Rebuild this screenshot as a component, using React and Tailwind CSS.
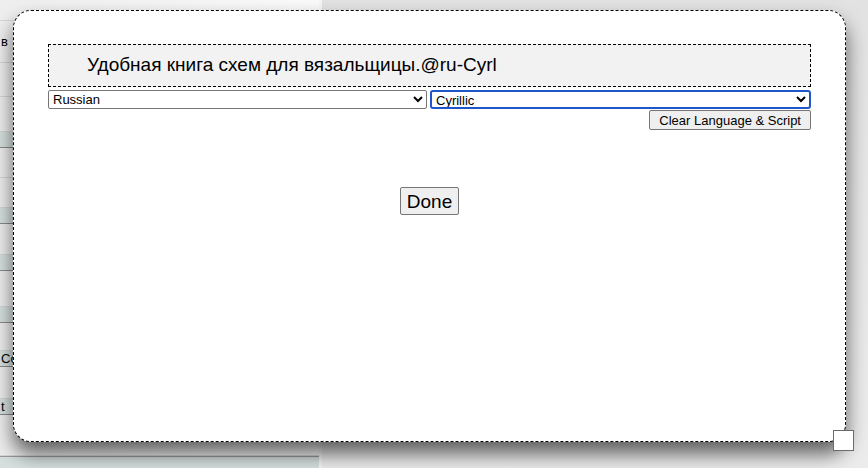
import React from 'react';

const font = { fontFamily: '"Liberation Sans", Arial, sans-serif' };

const BackgroundPanel = () => {
    // rows of the page underneath the dialog, only the left edge shows
    const rows = [
        { h: 'h-[21px]', kind: 'plain' },
        { h: 'h-[42px]', kind: 'text', label: 'в' },
        { h: 'h-[34px]', kind: 'plain' },
        { h: 'h-[35px]', kind: 'plain' },
        { h: 'h-[16px]', kind: 'teal' },
        { h: 'h-[30px]', kind: 'plain' },
        { h: 'h-[30px]', kind: 'plain' },
        { h: 'h-[16px]', kind: 'teal' },
        { h: 'h-[31px]', kind: 'plain' },
        { h: 'h-[16px]', kind: 'teal' },
        { h: 'h-[36px]', kind: 'plain' },
        { h: 'h-[16px]', kind: 'teal' },
        { h: 'h-[28px]', kind: 'plain' },
        { h: 'h-[16px]', kind: 'teal', label: 'Co' },
        { h: 'h-[32px]', kind: 'plain' },
        { h: 'h-[16px]', kind: 'teal', label: 't' },
        { h: 'h-[41px]', kind: 'plain' },
    ];

    return (
        <div className="w-[322px] flex flex-col bg-gradient-to-r from-[#eeeeee] to-[#fafafa] border-r-[3px] border-[#f6f6f6]">
            {rows.map((row, i) => (
                <div
                    key={i}
                    className={`${row.h} flex items-center border-b ${row.kind === 'teal' ? 'bg-[#d6e1df] border-[#8a8a8a]' : 'border-[#d6d6d6]'}`}
                >
                    {row.label && <span className="text-[13px] text-black pl-[1px]">{row.label}</span>}
                </div>
            ))}
            <div className="flex-1 bg-[#d6e1df] border-t border-[#9a9a9a]"></div>
        </div>
    );
};

const App = () => {
    return (
        <div className="relative w-[868px] h-[468px] overflow-hidden bg-[#ececec]" style={font}>
            <div className="flex h-full">
                <BackgroundPanel />
                <div className="flex-1 bg-gradient-to-b from-[#e2e2e2] to-[#ececec]"></div>
            </div>

            {/* dialog */}
            <div className="absolute left-[13px] top-[10px] w-[833px] h-[432px] bg-white rounded-[18px] border border-dashed border-black shadow-[0_12px_20px_rgba(0,0,0,0.6)]">
                <div className="pt-[33px] px-[34px]">
                    <div className="h-[43px] bg-[#f2f2f2] border border-dashed border-black flex items-center pl-[38px] text-[19px] text-black">
                        Удобная книга схем для вязальщицы.@ru-Cyrl
                    </div>
                    <div className="flex gap-[3px] mt-[3px]">
                        <select
                            defaultValue="Russian"
                            className="w-[379px] h-[19px] text-[13px] text-black bg-white border border-[#767676] rounded-[2px] pl-0 leading-none"
                            style={font}
                        >
                            <option>Russian</option>
                        </select>
                        <select
                            defaultValue="Cyrillic"
                            className="flex-1 h-[19px] text-[13px] text-black bg-white border-2 border-[#1f56c9] rounded-[3px] pl-0 leading-none"
                            style={font}
                        >
                            <option>Cyrillic</option>
                        </select>
                    </div>
                    <div className="flex justify-end mt-[1px]">
                        <button className="h-[20px] px-[9px] text-[13px] text-black bg-[#efefef] border border-[#767676] rounded-[2px] leading-none">
                            Clear Language &amp; Script
                        </button>
                    </div>
                    <div className="flex justify-center mt-[57px]">
                        <button className="h-[28px] px-[6px] text-[19px] text-black bg-[#efefef] border border-[#767676] rounded-[2px] leading-none">
                            Done
                        </button>
                    </div>
                </div>
            </div>

            {/* resize handle */}
            <div className="absolute left-[833px] top-[430px] w-[21px] h-[21px] bg-white border border-[#6b6b6b]"></div>
        </div>
    );
};

export default App;
